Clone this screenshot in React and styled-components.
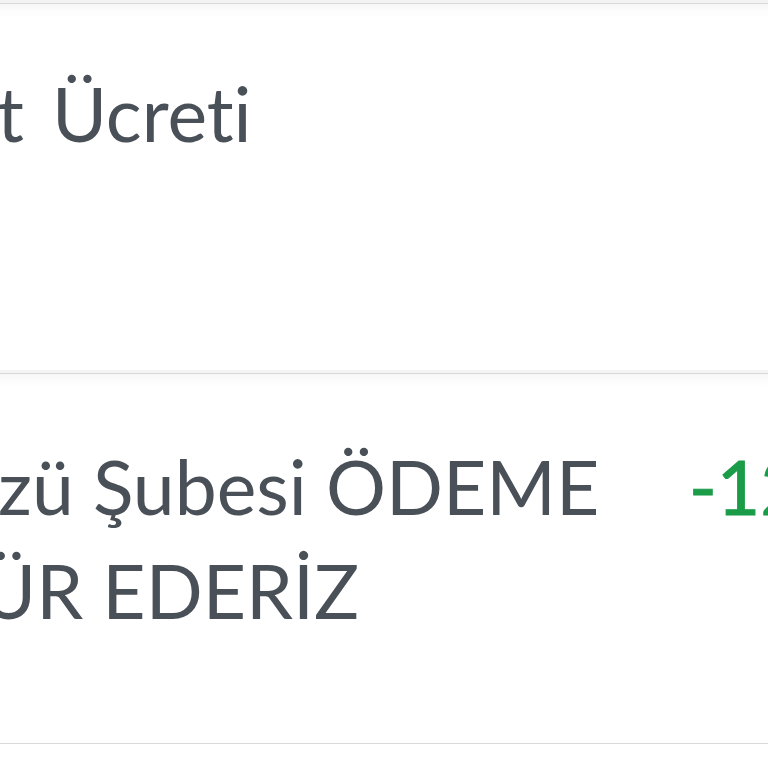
import React from "react";
import styled, { createGlobalStyle } from "styled-components";

const Global = createGlobalStyle`
  html, body { margin: 0; padding: 0; background: #ffffff; overflow: hidden; }
  body { font-family: Lato, "Noto Sans", sans-serif; font-variant-ligatures: none; }
`;

const Screen = styled.div`
  width: 768px;
  height: 768px;
  overflow: hidden;
  background: #ffffff;
`;

const List = styled.div`
  display: flex;
  flex-direction: column;
  border-top: 3px solid #f3f3f3;
  border-bottom: 1px solid #d9d9d9;
`;

const Row = styled.div`
  display: flex;
  align-items: flex-start;
  justify-content: space-between;
  height: ${(p) => p.$h}px;
  box-sizing: border-box;
  padding-top: ${(p) => p.$pt}px;
  background: linear-gradient(#f7f7f7 0px, #fdfdfd 8px, #ffffff 14px);
  border-top: 1px solid #d9d9d9;
  & + & { box-shadow: 0 -3px 0 #f4f4f4; }
`;

const Title = styled.div`
  display: flex;
  flex-direction: column;
  font-size: 75px;
  line-height: 104px;
  font-weight: 400;
  color: #4a5057;
  white-space: nowrap;
  font-variant-ligatures: none;
`;

const Line = styled.span`
  display: block;
  margin-left: ${(p) => p.$shift}px;
  word-spacing: ${(p) => p.$ws || 0}px;
`;

const Amount = styled.div`
  flex-shrink: 0;
  width: 79px;
  white-space: nowrap;
  font-size: 75px;
  line-height: 104px;
  font-weight: 400;
  color: #1a9c48;
  -webkit-text-stroke: 1px #1a9c48;
`;

export default function App() {
  return (
    <>
      <Global />
      <Screen>
        <List>
          <Row $h={370} $pt={57}>
            <Title>
              <Line $shift={-3} $ws={9}>t Ücreti</Line>
            </Title>
          </Row>
          <Row $h={370} $pt={60}>
            <Title>
              <Line $shift={-2}>zü Şubesi ÖDEME</Line>
              <Line $shift={-19}>ÜR EDERİZ</Line>
            </Title>
            <Amount>-12,50 TL</Amount>
          </Row>
        </List>
      </Screen>
    </>
  );
}
